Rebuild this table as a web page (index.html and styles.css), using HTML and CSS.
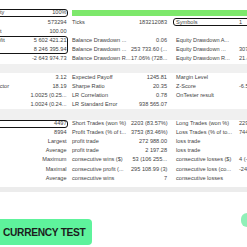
FILE: index.html
```html
<!DOCTYPE html>
<html>
<head>
<meta charset="utf-8">
<link rel="stylesheet" href="styles.css">
</head>
<body>
<div class="page">
  <div class="report">
    <div class="grid">
      <div class="c la">History Quality</div><div class="c va">100%</div><div class="barcell"><div class="bar"></div></div>

      <div class="c la">Bars</div><div class="c va">573294</div><div class="c lb">Ticks</div><div class="c vb">183212083</div><div class="c lc">Symbols</div><div class="c vc">1</div>

      <div class="c la">Initial Deposit</div><div class="c va">100.00</div><div class="c lb"></div><div class="c vb"></div><div class="c lc"></div><div class="c vc"></div>

      <div class="c la">Total Net Profit</div><div class="c va">5 602 421.21</div><div class="c lb">Balance Drawdown ...</div><div class="c vb">0.06</div><div class="c lc">Equity Drawdown A...</div><div class="c vc"></div>

      <div class="c la">Gross Profit</div><div class="c va">8 246 395.94</div><div class="c lb">Balance Drawdown ...</div><div class="c vb">253 733.60 (...</div><div class="c lc">Equity Drawdown ...</div><div class="c vc">307 485.13 (...</div>

      <div class="c la">Gross Loss</div><div class="c va">-2 643 974.73</div><div class="c lb">Balance Drawdown R...</div><div class="c vb">17.06% (728...</div><div class="c lc">Equity Drawdown R...</div><div class="c vc">21.47% (...</div>

      <div class="sep"></div>

      <div class="c la">Profit Factor</div><div class="c va">3.12</div><div class="c lb">Expected Payoff</div><div class="c vb">1245.81</div><div class="c lc">Margin Level</div><div class="c vc"></div>

      <div class="c la">Recovery Factor</div><div class="c va">18.19</div><div class="c lb">Sharpe Ratio</div><div class="c vb">20.35</div><div class="c lc">Z-Score</div><div class="c vc">-6.50 (99.74%)</div>

      <div class="c la">AHPR</div><div class="c va">1.0025 (0.25...</div><div class="c lb">LR Correlation</div><div class="c vb">0.78</div><div class="c lc">OnTester result</div><div class="c vc"></div>

      <div class="c la">GHPR</div><div class="c va">1.0024 (0.24...</div><div class="c lb">LR Standard Error</div><div class="c vb">938 565.07</div><div class="c lc"></div><div class="c vc"></div>

      <div class="sep sep2"></div>

      <div class="c la">Total Trades</div><div class="c va">4497</div><div class="c lb">Short Trades (won %)</div><div class="c vb">2203 (83.57%)</div><div class="c lc">Long Trades (won %)</div><div class="c vc">2294 (83.87%)</div>

      <div class="c la">Total Deals</div><div class="c va">8994</div><div class="c lb">Profit Trades (% of t...</div><div class="c vb">3753 (83.46%)</div><div class="c lc">Loss Trades (% of to...</div><div class="c vc">744 (16.54%)</div>

      <div class="c la"></div><div class="c va">Largest</div><div class="c lb">profit trade</div><div class="c vb">272 988.00</div><div class="c lc">loss trade</div><div class="c vc"></div>

      <div class="c la"></div><div class="c va">Average</div><div class="c lb">profit trade</div><div class="c vb">2 197.28</div><div class="c lc">loss trade</div><div class="c vc"></div>

      <div class="c la"></div><div class="c va">Maximum</div><div class="c lb">consecutive wins ($)</div><div class="c vb">53 (106 255...</div><div class="c lc">consecutive losses ($)</div><div class="c vc">4 (-40 ...</div>

      <div class="c la"></div><div class="c va">Maximal</div><div class="c lb">consecutive profit (...</div><div class="c vb">295 108.99 (3)</div><div class="c lc">consecutive loss (co...</div><div class="c vc">-24 ...</div>

      <div class="c la"></div><div class="c va">Average</div><div class="c lb">consecutive wins</div><div class="c vb">7</div><div class="c lc">consecutive losses</div><div class="c vc"></div>

      <div class="sep sep3"></div>
    </div>

    <div class="hl hl1"></div>
    <div class="hl hl2"></div>
    <div class="hl hl3"></div>
    <div class="hl hl4"></div>
  </div>

  <div class="actions">
    <div class="btn">CURRENCY TEST</div>
    <div class="btn btn-edge"></div>
  </div>
</div>
</body>
</html>
```

FILE: styles.css
```css
html, body {
  margin: 0;
  padding: 0;
  background: #ffffff;
  overflow: hidden;
}

.page {
  width: 247px;
  height: 247px;
  overflow: hidden;
  position: relative;
  font-family: "Liberation Sans", Arial, sans-serif;
}

.report {
  position: relative;
  margin-left: -32px;
  padding-top: 8.4px;
  width: 300px;
}

.grid {
  display: grid;
  grid-template-columns: 62px 39px 62px 38px 69px 60px;
  grid-auto-rows: 9.2px;
  font-size: 5.6px;
  line-height: 9.2px;
  color: #444444;
}

.c {
  white-space: nowrap;
  overflow: hidden;
}

.va, .vb {
  text-align: right;
}

.va { padding-right: 2.5px; }
.lb { padding-left: 3px; }
.vb { padding-right: 2px; overflow: visible; }
.lc { padding-left: 7px; }
.vc { padding-left: 1px; }

.barcell {
  grid-column: 3 / 7;
  padding-left: 3px;
  display: flex;
  align-items: center;
}

.bar {
  height: 6px;
  width: 100%;
  background: #7de86b;
}

.sep {
  grid-column: 1 / -1;
  background: #f0f0f0;
}

.sep2 {
  height: 10.4px;
}

.sep3 {
  background: linear-gradient(#ffffff 0, #ffffff 40%, #ececec 40%, #ececec 100%);
}

.hl {
  position: absolute;
  border: 1.5px solid #151515;
  border-radius: 3px;
}

.hl1 { left: 20px; top: 8.6px; width: 78px; height: 6.6px; }
.hl2 { left: 20px; top: 36.4px; width: 78px; height: 15.6px; }
.hl3 { left: 205px; top: 17.8px; width: 100px; height: 6.6px; }
.hl4 { left: 20px; top: 119.6px; width: 78px; height: 6.6px; }

.actions {
  display: flex;
  justify-content: space-between;
  align-items: flex-start;
  margin-top: 27px;
  margin-left: -10px;
  margin-right: -20px;
}

.btn {
  background: #5ef39c;
  border-radius: 4px;
  height: 26px;
  padding: 0 6px 0 13px;
  display: flex;
  align-items: center;
  font-weight: bold;
  font-size: 10.2px;
  letter-spacing: -0.3px;
  color: #1c1c1c;
}

.btn-edge {
  width: 26px;
  height: 14px;
  padding: 0;
  margin-top: -6px;
  border-radius: 6px;
  background: #8ff0b8;
}
```
